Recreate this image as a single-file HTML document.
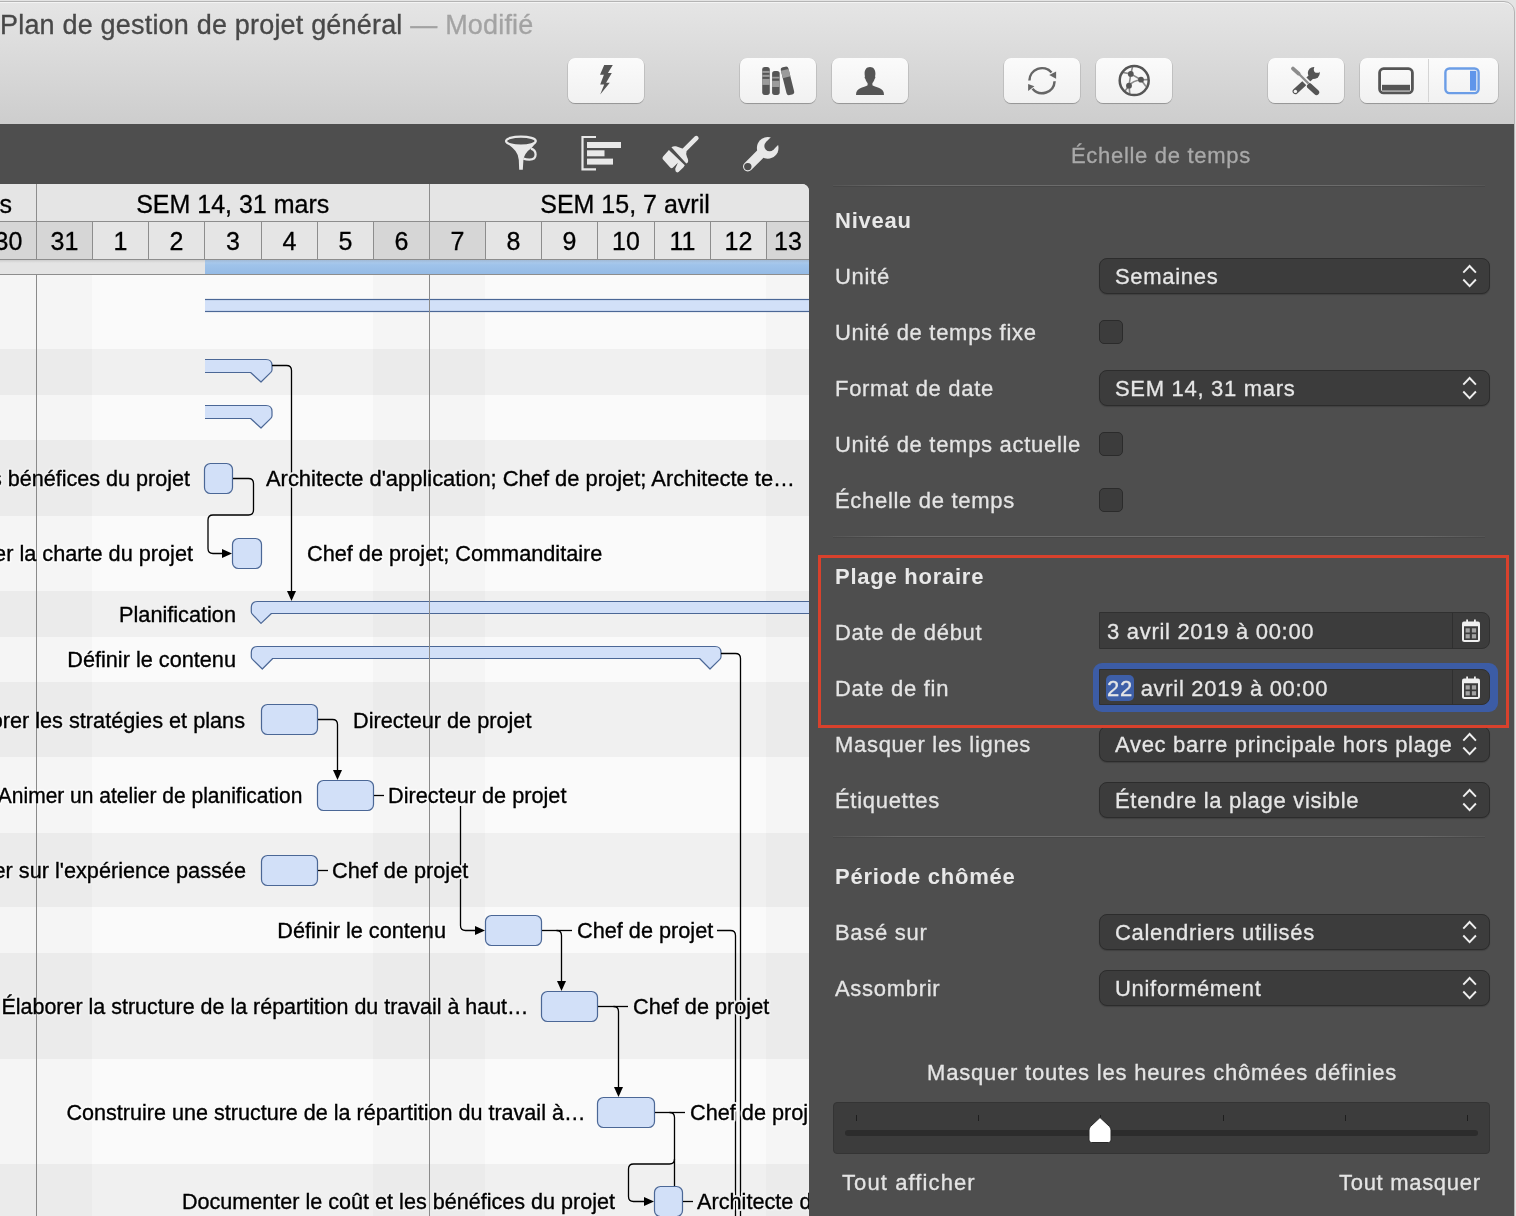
<!DOCTYPE html>
<html><head><meta charset="utf-8">
<style>
*{box-sizing:border-box;margin:0;padding:0}
html,body{width:1516px;height:1216px;overflow:hidden;background:#e4e4e4;font-family:"Liberation Sans",sans-serif}
.abs{position:absolute}
#win{position:absolute;left:0;top:0;width:1516px;height:1216px;overflow:hidden;will-change:transform}
#frame{position:absolute;left:-20px;top:1px;width:1535px;height:1300px;border:1px solid #b4b4b4;border-top-right-radius:11px;pointer-events:none}
#titlebar{position:absolute;left:0;top:2px;width:1514px;height:122px;background:linear-gradient(#e5e5e5,#cdcdcd);border-top:1px solid #f4f4f4;border-top-right-radius:10px}
#title{position:absolute;left:0px;top:10px;font-size:27px;color:#484848;white-space:nowrap;letter-spacing:0.19px;-webkit-text-stroke:0.3px currentColor}
#title span{color:#a3a3a3}
.tb{position:absolute;top:57px;height:45px;width:76px;border-radius:7px;background:linear-gradient(#fbfbfb,#f1f1f1);box-shadow:0 0.5px 0 0.5px rgba(0,0,0,0.18),0 1px 1px rgba(0,0,0,0.12)}
#gantt{position:absolute;left:0;top:184px;width:809px;height:1032px;background:#fafafa;border-top-right-radius:7px;overflow:hidden}
#dark{position:absolute;left:0;top:124px;width:1514px;height:1092px;background:#4e4e4e}
#insp{position:absolute;left:0;top:0;width:1516px;height:1216px;color:#e6e6e6}
.lbl{position:absolute;left:26px;font-size:22px;letter-spacing:0.7px;white-space:nowrap;color:#e4e4e4;-webkit-text-stroke:0.3px currentColor}
.hdr{position:absolute;left:26px;font-size:22px;font-weight:bold;letter-spacing:0.75px;white-space:nowrap;color:#e8e8e8}
.sep{position:absolute;left:24px;width:652px;height:1px;background:linear-gradient(90deg,rgba(110,110,110,0.2),#6c6c6c 10%,#6c6c6c 90%,rgba(110,110,110,0.2));box-shadow:0 1px 0 rgba(0,0,0,0.08)}
.pop{position:absolute;left:290px;width:391px;height:36px;border-radius:8px;background:#3c3c3c;border:1px solid #2c2c2c;box-shadow:0 1px 1px rgba(0,0,0,0.18)}
.pop .t{position:absolute;left:15px;top:4px;font-size:22px;letter-spacing:0.7px;white-space:nowrap;color:#e6e6e6;-webkit-text-stroke:0.3px currentColor}

.cb{position:absolute;left:290px;width:24px;height:24px;border-radius:5px;background:#3c3c3c;border:1px solid #2b2b2b}
</style></head><body>
<div id="win">
<div id="dark"></div>
<div id="titlebar"></div>
<div id="title">Plan de gestion de projet général <span>— Modifié</span></div>
<div class="tb" style="left:568px;top:58px;width:76px;height:45px;"></div>
<div class="tb" style="left:740px;top:58px;width:76px;height:45px;"></div>
<div class="tb" style="left:832px;top:58px;width:76px;height:45px;"></div>
<div class="tb" style="left:1004px;top:58px;width:76px;height:45px;"></div>
<div class="tb" style="left:1096px;top:58px;width:76px;height:45px;"></div>
<div class="tb" style="left:1268px;top:58px;width:76px;height:45px;"></div>
<div class="tb" style="left:1360px;top:58px;width:138px;height:45px;"></div>
<div style="position:absolute;left:1428px;top:59px;width:1px;height:43px;background:#d4d4d4"></div>
<svg style="position:absolute;left:0;top:0" width="1516" height="124" viewBox="0 0 1516 124"><path d="M604.2,65 L612.8,65 L607.9,73 L611.8,73 L606.1,82.8 L609.8,82.8 L600.2,94.6 L604.2,84.6 L600.2,84.6 L603.9,74.8 L600,74.8 Z" fill="#555555"/><rect x="762.2" y="66.9" width="7.6" height="28" rx="2.6" fill="#555555"/><rect x="762.2" y="70.9" width="7.6" height="2.0" fill="#9b9b9b"/><rect x="762.2" y="74.8" width="7.6" height="2.1000000000000085" fill="#9b9b9b"/><rect x="762.2" y="78.9" width="7.6" height="6.0" fill="#9b9b9b"/><rect x="772.1" y="71.1" width="7.6" height="23.8" rx="2.6" fill="#555555"/><rect x="772.1" y="76.8" width="7.6" height="1.7000000000000028" fill="#9b9b9b"/><rect x="772.1" y="80.8" width="7.6" height="6.200000000000003" fill="#9b9b9b"/><g transform="rotate(-14 787.4 80.9)"><rect x="783.6" y="66.6" width="7.8" height="28.6" rx="2.6" fill="#555555"/><rect x="783.6" y="69.6" width="7.8" height="7.6" fill="#9b9b9b"/></g><path d="M870,66.9 C866.3,66.9 864.6,69.8 864.6,73.5 C864.6,74.6 864.7,75.6 865,76.6 C864.4,76.8 864.5,78.3 865.4,78.9 C866,80.9 866.9,82.4 867.6,83.1 L867.6,85.3 C866.4,86.2 862.6,87.2 859.8,88.6 C857.6,89.7 856,91.4 856,94.9 L884,94.9 C884,91.4 882.4,89.7 880.2,88.6 C877.4,87.2 873.6,86.2 872.4,85.3 L872.4,83.1 C873.1,82.4 874,80.9 874.6,78.9 C875.5,78.3 875.6,76.8 875,76.6 C875.3,75.6 875.4,74.6 875.4,73.5 C875.4,69.8 873.7,66.9 870,66.9 Z" fill="#555555"/><path d="M1029.4,80.6 A12.6,12.6 0 0 1 1051.5,72.5" fill="none" stroke="#666666" stroke-width="2.5"/><path d="M1049.2,75.1 L1056.1,71.4 L1056.1,78.8 Z" fill="#666666"/><path d="M1054.6,81.2 A12.6,12.6 0 0 1 1032.5,88.8" fill="none" stroke="#666666" stroke-width="2.5"/><path d="M1028.1,83.9 L1028.1,91 L1034.4,86.3 Z" fill="#666666"/><g stroke="#8a8a8a" stroke-width="1.6" fill="none"><path d="M1130.8,73.9 L1141,79.7 M1130.8,73.9 L1129,85.7 M1129,85.7 Q1133,80.5 1141,79.7 M1130.8,73.9 L1132.5,67 M1130.8,73.9 L1123,72.5 M1141,79.7 L1148.5,79.6 M1141,79.7 L1146,86.5 M1129,85.7 L1129.8,93.5 M1129,85.7 L1124.8,91.2"/></g><circle cx="1134.2" cy="80.6" r="14.5" fill="none" stroke="#555555" stroke-width="2.5"/><circle cx="1130.8" cy="73.9" r="2.9" fill="#555555"/><circle cx="1141" cy="79.7" r="2.9" fill="#555555"/><circle cx="1129" cy="85.7" r="2.9" fill="#555555"/><defs><mask id="wm" maskUnits="userSpaceOnUse" x="1270" y="55" width="70" height="50"><rect x="1280" y="60" width="50" height="40" fill="#fff"/><circle cx="1317.2" cy="69.4" r="3.4" fill="#000"/><path d="M1317.2,69.4 L1321.5,63.5 L1325,68 Z" fill="#000"/><circle cx="1295.4" cy="91.4" r="1.7" fill="#000"/></mask></defs><g mask="url(#wm)" fill="#555555"><path d="M1311,77 L1295.4,91.4" stroke="#555555" stroke-width="5.6" stroke-linecap="round"/><circle cx="1313.8" cy="73" r="6"/></g><path d="M1296,71 L1316,91" stroke="#f5f5f5" stroke-width="5.5"/><path d="M1293,68.6 L1298.6,73.6" stroke="#8c8c8c" stroke-width="3.8" stroke-linecap="round"/><path d="M1298,73 L1308.5,83.5" stroke="#8c8c8c" stroke-width="2.3"/><path d="M1309.8,86.3 L1316.4,92.3" stroke="#555555" stroke-width="5.6" stroke-linecap="round"/><path d="M1306.8,86 L1309.8,83 L1312,85.2 L1309,88.2 Z" fill="#555555"/><rect x="1379.6" y="68.7" width="32.8" height="24.2" rx="4" fill="none" stroke="#555555" stroke-width="2.8"/><rect x="1382" y="84.8" width="28" height="5.8" fill="#555555"/><rect x="1445.4" y="68.5" width="33.2" height="24.6" rx="4" fill="none" stroke="#6b9de6" stroke-width="2.4"/><rect x="1470" y="70.8" width="6.3" height="19.8" fill="#5f95ea"/></svg>
<svg style="position:absolute;left:0;top:0" width="1516" height="190" viewBox="0 0 1516 190"><ellipse cx="520.9" cy="141.1" rx="14.9" ry="4.5" fill="none" stroke="#e8e8e8" stroke-width="2.2"/><path d="M506,142.5 Q512,147 515.5,151 Q518.3,154.5 518.8,160 L519.2,169.8 L522.8,169.8 L523.4,160 Q524.3,153 531.5,148 L536.2,142.5 Q529,145.2 521,145.2 Q512,145.2 506,142.5 Z" fill="#e8e8e8"/><path d="M531,148.6 Q535.6,150 535.6,154.5 Q535.6,159.6 529.5,159.6 Q526,159.6 523.4,158.6" fill="none" stroke="#e8e8e8" stroke-width="2.2"/><path d="M596,137 L582.5,137 L582.5,169.3 L596,169.3" fill="none" stroke="#e8e8e8" stroke-width="2.2"/><rect x="587" y="142" width="34" height="6" fill="#e8e8e8"/><rect x="587" y="150.3" width="17.5" height="6" fill="#e8e8e8"/><rect x="587" y="158.6" width="26" height="6" fill="#e8e8e8"/><path d="M696.3,138.2 L684.3,150.2" stroke="#e8e8e8" stroke-width="4.7" stroke-linecap="round"/><path d="M671.4,147.3 Q673.5,145.8 676,146.3 L683,148.7 L686.6,151.5 Q685.5,154 687,157 Q689,160.5 687.6,162.8 L686.3,163.6 Z" fill="#e8e8e8"/><path d="M668.9,150.1 L684.8,165.3 L683.3,167.5 L678.5,172 Q676.8,173.2 675.6,171.3 L675.2,168.8 L677.9,162.8 L672.8,167.8 Q671.5,168.6 670.2,167.6 L662.8,159.3 Q661.9,157.9 663.1,156.4 Z" fill="#e8e8e8"/><defs><mask id="wrm" maskUnits="userSpaceOnUse" x="720" y="120" width="80" height="70"><rect x="730" y="125" width="60" height="60" fill="#fff"/><circle cx="769.6" cy="146" r="5.3" fill="#000"/><path d="M769.6,146 L781,134.6" stroke="#000" stroke-width="10.6"/><circle cx="747.8" cy="166.6" r="3.7" fill="#000"/></mask></defs><g mask="url(#wrm)"><circle cx="767.7" cy="147.9" r="10.8" fill="#e8e8e8"/><path d="M747.8,166.6 L762,152.4" stroke="#e8e8e8" stroke-width="9.6" stroke-linecap="round"/></g></svg>
<div id="insp">
<div class="lbl" style="left:1071px;top:143px;line-height:25px;color:#a9a9a9">Échelle de temps</div>
<div class="sep" style="left:833px;top:185px"></div>
<div class="hdr" style="left:835px;top:208px;line-height:25px">Niveau</div>
<div class="lbl" style="left:835px;top:264px;line-height:25px">Unité</div>
<div class="pop" style="left:1099px;top:258px"><div class="t" style="top:5px;left:15px;line-height:25px">Semaines</div><svg width="391" height="36" viewBox="0 0 391 36" style="position:absolute;left:-1px;top:-1px"><path d="M364.3,14.6 L370.6,8 L376.9,14.6 M364.3,21.5 L370.6,28.1 L376.9,21.5" fill="none" stroke="#efefef" stroke-width="1.9" stroke-linecap="butt" stroke-linejoin="miter"/></svg></div>
<div class="lbl" style="left:835px;top:320px;line-height:25px">Unité de temps fixe</div>
<div class="cb" style="left:1099px;top:320px"></div>
<div class="lbl" style="left:835px;top:376px;line-height:25px">Format de date</div>
<div class="pop" style="left:1099px;top:370px"><div class="t" style="top:5px;left:15px;line-height:25px">SEM 14, 31 mars</div><svg width="391" height="36" viewBox="0 0 391 36" style="position:absolute;left:-1px;top:-1px"><path d="M364.3,14.6 L370.6,8 L376.9,14.6 M364.3,21.5 L370.6,28.1 L376.9,21.5" fill="none" stroke="#efefef" stroke-width="1.9" stroke-linecap="butt" stroke-linejoin="miter"/></svg></div>
<div class="lbl" style="left:835px;top:432px;line-height:25px">Unité de temps actuelle</div>
<div class="cb" style="left:1099px;top:432px"></div>
<div class="lbl" style="left:835px;top:488px;line-height:25px">Échelle de temps</div>
<div class="cb" style="left:1099px;top:488px"></div>
<div class="sep" style="left:833px;top:536px"></div>
<div class="hdr" style="left:835px;top:564px;line-height:25px">Plage horaire</div>
<div class="lbl" style="left:835px;top:620px;line-height:25px">Date de début</div>
<div class="lbl" style="left:835px;top:676px;line-height:25px">Date de fin</div>
<div class="lbl" style="left:835px;top:732px;line-height:25px">Masquer les lignes</div>
<div class="pop" style="left:1099px;top:726px"><div class="t" style="top:5px;left:15px;line-height:25px">Avec barre principale hors plage</div><svg width="391" height="36" viewBox="0 0 391 36" style="position:absolute;left:-1px;top:-1px"><path d="M364.3,14.6 L370.6,8 L376.9,14.6 M364.3,21.5 L370.6,28.1 L376.9,21.5" fill="none" stroke="#efefef" stroke-width="1.9" stroke-linecap="butt" stroke-linejoin="miter"/></svg></div>
<div class="lbl" style="left:835px;top:788px;line-height:25px">Étiquettes</div>
<div class="pop" style="left:1099px;top:782px"><div class="t" style="top:5px;left:15px;line-height:25px">Étendre la plage visible</div><svg width="391" height="36" viewBox="0 0 391 36" style="position:absolute;left:-1px;top:-1px"><path d="M364.3,14.6 L370.6,8 L376.9,14.6 M364.3,21.5 L370.6,28.1 L376.9,21.5" fill="none" stroke="#efefef" stroke-width="1.9" stroke-linecap="butt" stroke-linejoin="miter"/></svg></div>
<div class="sep" style="left:833px;top:836px"></div>
<div class="hdr" style="left:835px;top:864px;line-height:25px">Période chômée</div>
<div class="lbl" style="left:835px;top:920px;line-height:25px">Basé sur</div>
<div class="pop" style="left:1099px;top:914px"><div class="t" style="top:5px;left:15px;line-height:25px">Calendriers utilisés</div><svg width="391" height="36" viewBox="0 0 391 36" style="position:absolute;left:-1px;top:-1px"><path d="M364.3,14.6 L370.6,8 L376.9,14.6 M364.3,21.5 L370.6,28.1 L376.9,21.5" fill="none" stroke="#efefef" stroke-width="1.9" stroke-linecap="butt" stroke-linejoin="miter"/></svg></div>
<div class="lbl" style="left:835px;top:976px;line-height:25px">Assombrir</div>
<div class="pop" style="left:1099px;top:970px"><div class="t" style="top:5px;left:15px;line-height:25px">Uniformément</div><svg width="391" height="36" viewBox="0 0 391 36" style="position:absolute;left:-1px;top:-1px"><path d="M364.3,14.6 L370.6,8 L376.9,14.6 M364.3,21.5 L370.6,28.1 L376.9,21.5" fill="none" stroke="#efefef" stroke-width="1.9" stroke-linecap="butt" stroke-linejoin="miter"/></svg></div>
<div class="lbl" style="left:927px;top:1060px;line-height:25px;letter-spacing:0.8px">Masquer toutes les heures chômées définies</div>
<div style="position:absolute;left:833px;top:1102px;width:657px;height:52px;background:#3c3c3c;border-radius:4px;border:1px solid #343434"></div>
<div style="position:absolute;left:845px;top:1130px;width:633px;height:6px;background:#2c2c2c;border-radius:3px"></div>
<div style="position:absolute;left:855.5px;top:1115px;width:1.5px;height:6px;background:#1e1e1e"></div>
<div style="position:absolute;left:977.5px;top:1115px;width:1.5px;height:6px;background:#1e1e1e"></div>
<div style="position:absolute;left:1099.5px;top:1115px;width:1.5px;height:6px;background:#1e1e1e"></div>
<div style="position:absolute;left:1222.5px;top:1115px;width:1.5px;height:6px;background:#1e1e1e"></div>
<div style="position:absolute;left:1344.5px;top:1115px;width:1.5px;height:6px;background:#1e1e1e"></div>
<div style="position:absolute;left:1466.5px;top:1115px;width:1.5px;height:6px;background:#1e1e1e"></div>
<svg style="position:absolute;left:1087px;top:1116px" width="26" height="28" viewBox="0 0 26 28"><path d="M13,1.5 L22.5,10.5 Q24,12 24,14 L24,24 Q24,26.5 21.5,26.5 L4.5,26.5 Q2,26.5 2,24 L2,14 Q2,12 3.5,10.5 Z" fill="#ffffff" stroke="#2a2a2a" stroke-width="1"/></svg>
<div class="lbl" style="left:842px;top:1170px;line-height:25px;letter-spacing:1.1px">Tout afficher</div>
<div class="lbl" style="left:1339px;top:1170px;line-height:25px">Tout masquer</div>
<div style="position:absolute;left:1099px;top:612px;width:391px;height:37px;background:#3c3c3c;border-radius:0 8px 8px 0;border:1px solid #303030"></div>
<div style="position:absolute;left:1452px;top:612px;width:1px;height:37px;background:#2f2f2f"></div>
<div style="position:absolute;left:1461px;top:619px;width:20px;height:24px"><svg width="20" height="24" viewBox="0 0 20 24"><path d="M2,6 L18,6 L18,20.5 Q18,22 16.5,22 L3.5,22 Q2,22 2,20.5 Z" fill="none" stroke="#f0f0f0" stroke-width="2"/><path d="M1,7.2 L1,4.5 Q1,2.5 3,2.5 L17,2.5 Q19,2.5 19,4.5 L19,7.2 Z" fill="#f0f0f0"/><rect x="5.2" y="0.5" width="1.8" height="3" fill="#f0f0f0"/><rect x="13" y="0.5" width="1.8" height="3" fill="#f0f0f0"/><rect x="4.6" y="9.3" width="4.2" height="4.2" fill="#a3a3a3"/><rect x="10.9" y="9.3" width="4.2" height="4.2" fill="#a3a3a3"/><rect x="4.6" y="15.2" width="4.2" height="4.2" fill="#a3a3a3"/><rect x="10.9" y="15.2" width="4.2" height="4.2" fill="#a3a3a3"/></svg></div>
<div class="lbl" style="left:1107px;top:619px;line-height:25px;color:#e6e6e6">3 avril 2019 à 00:00</div>
<div style="position:absolute;left:1093px;top:663px;width:405px;height:49px;border-radius:9px;background:#3c5ca5"></div>
<div style="position:absolute;left:1099px;top:669px;width:391px;height:36px;background:#3c3c3c;border-radius:0 8px 8px 0;border:1px solid #303030"></div>
<div style="position:absolute;left:1452px;top:669px;width:1px;height:36px;background:#2f2f2f"></div>
<div style="position:absolute;left:1461px;top:676px;width:20px;height:24px"><svg width="20" height="24" viewBox="0 0 20 24"><path d="M2,6 L18,6 L18,20.5 Q18,22 16.5,22 L3.5,22 Q2,22 2,20.5 Z" fill="none" stroke="#f0f0f0" stroke-width="2"/><path d="M1,7.2 L1,4.5 Q1,2.5 3,2.5 L17,2.5 Q19,2.5 19,4.5 L19,7.2 Z" fill="#f0f0f0"/><rect x="5.2" y="0.5" width="1.8" height="3" fill="#f0f0f0"/><rect x="13" y="0.5" width="1.8" height="3" fill="#f0f0f0"/><rect x="4.6" y="9.3" width="4.2" height="4.2" fill="#a3a3a3"/><rect x="10.9" y="9.3" width="4.2" height="4.2" fill="#a3a3a3"/><rect x="4.6" y="15.2" width="4.2" height="4.2" fill="#a3a3a3"/><rect x="10.9" y="15.2" width="4.2" height="4.2" fill="#a3a3a3"/></svg></div>
<div class="lbl" style="left:1107px;top:676px;line-height:25px;color:#e6e6e6"><span style="background:#3e5fa8;border-radius:5px;padding:1px 1px 0px 1px;margin-left:-1px">22</span> avril 2019 à 00:00</div>
<div style="position:absolute;left:818px;top:555px;width:691px;height:173px;border:3px solid #d8412c"></div>
</div>
<div id="gantt"><svg width="809" height="1032" viewBox="0 184 809 1032" style="position:absolute;left:0;top:0;font-family:'Liberation Sans',sans-serif">
<rect x="0" y="183" width="809" height="92" fill="#e5e5e5"/>
<rect x="-20" y="222" width="56" height="37" fill="#d6d6d6"/>
<rect x="36" y="222" width="56" height="37" fill="#d6d6d6"/>
<rect x="373" y="222" width="56" height="37" fill="#d6d6d6"/>
<rect x="429" y="222" width="56" height="37" fill="#d6d6d6"/>
<rect x="766" y="222" width="56" height="37" fill="#d6d6d6"/>
<rect x="0" y="260" width="809" height="14" fill="#e4e4e4"/>
<defs><linearGradient id="pg" x1="0" y1="0" x2="0" y2="1"><stop offset="0" stop-color="#b3cfee"/><stop offset="0.35" stop-color="#9fc3ea"/><stop offset="1" stop-color="#95bbe6"/></linearGradient><linearGradient id="sh" x1="0" y1="0" x2="0" y2="1"><stop offset="0" stop-color="#000" stop-opacity="0.10"/><stop offset="1" stop-color="#000" stop-opacity="0"/></linearGradient></defs>
<rect x="205" y="260" width="604" height="14" fill="url(#pg)"/>
<rect x="0" y="260" width="809" height="3" fill="url(#sh)"/>
<rect x="0" y="221" width="809" height="1" fill="#8d8d8d"/>
<rect x="0" y="259" width="809" height="1" fill="#8d8d8d"/>
<rect x="0" y="274" width="809" height="1" fill="#8d8d8d"/>
<rect x="36" y="222" width="1" height="37" fill="#8d8d8d"/>
<rect x="92" y="222" width="1" height="37" fill="#8d8d8d"/>
<rect x="148" y="222" width="1" height="37" fill="#8d8d8d"/>
<rect x="204" y="222" width="1" height="37" fill="#8d8d8d"/>
<rect x="261" y="222" width="1" height="37" fill="#8d8d8d"/>
<rect x="317" y="222" width="1" height="37" fill="#8d8d8d"/>
<rect x="373" y="222" width="1" height="37" fill="#8d8d8d"/>
<rect x="429" y="222" width="1" height="37" fill="#8d8d8d"/>
<rect x="485" y="222" width="1" height="37" fill="#8d8d8d"/>
<rect x="541" y="222" width="1" height="37" fill="#8d8d8d"/>
<rect x="597" y="222" width="1" height="37" fill="#8d8d8d"/>
<rect x="654" y="222" width="1" height="37" fill="#8d8d8d"/>
<rect x="710" y="222" width="1" height="37" fill="#8d8d8d"/>
<rect x="766" y="222" width="1" height="37" fill="#8d8d8d"/>
<rect x="822" y="222" width="1" height="37" fill="#8d8d8d"/>
<rect x="36" y="184" width="1" height="38" fill="#8d8d8d"/>
<rect x="429" y="184" width="1" height="38" fill="#8d8d8d"/>
<text x="232.7" y="213" text-anchor="middle" font-size="25" fill="#000" stroke="#000" stroke-width="0.3">SEM 14, 31 mars</text>
<text x="625" y="213" text-anchor="middle" font-size="25" fill="#000" stroke="#000" stroke-width="0.3">SEM 15, 7 avril</text>
<text x="12" y="213" text-anchor="end" font-size="25" fill="#000" stroke="#000" stroke-width="0.3">s</text>
<text x="8.5" y="250" text-anchor="middle" font-size="25" fill="#000" stroke="#000" stroke-width="0.3">30</text>
<text x="64.5" y="250" text-anchor="middle" font-size="25" fill="#000" stroke="#000" stroke-width="0.3">31</text>
<text x="120.5" y="250" text-anchor="middle" font-size="25" fill="#000" stroke="#000" stroke-width="0.3">1</text>
<text x="176.5" y="250" text-anchor="middle" font-size="25" fill="#000" stroke="#000" stroke-width="0.3">2</text>
<text x="233.0" y="250" text-anchor="middle" font-size="25" fill="#000" stroke="#000" stroke-width="0.3">3</text>
<text x="289.5" y="250" text-anchor="middle" font-size="25" fill="#000" stroke="#000" stroke-width="0.3">4</text>
<text x="345.5" y="250" text-anchor="middle" font-size="25" fill="#000" stroke="#000" stroke-width="0.3">5</text>
<text x="401.5" y="250" text-anchor="middle" font-size="25" fill="#000" stroke="#000" stroke-width="0.3">6</text>
<text x="457.5" y="250" text-anchor="middle" font-size="25" fill="#000" stroke="#000" stroke-width="0.3">7</text>
<text x="513.5" y="250" text-anchor="middle" font-size="25" fill="#000" stroke="#000" stroke-width="0.3">8</text>
<text x="569.5" y="250" text-anchor="middle" font-size="25" fill="#000" stroke="#000" stroke-width="0.3">9</text>
<text x="626.0" y="250" text-anchor="middle" font-size="25" fill="#000" stroke="#000" stroke-width="0.3">10</text>
<text x="682.5" y="250" text-anchor="middle" font-size="25" fill="#000" stroke="#000" stroke-width="0.3">11</text>
<text x="738.5" y="250" text-anchor="middle" font-size="25" fill="#000" stroke="#000" stroke-width="0.3">12</text>
<text x="788.0" y="250" text-anchor="middle" font-size="25" fill="#000" stroke="#000" stroke-width="0.3">13</text>
<rect x="0" y="275" width="809" height="74" fill="#fafafa"/>
<rect x="0" y="349" width="809" height="46" fill="#f0f0f0"/>
<rect x="0" y="395" width="809" height="45" fill="#fafafa"/>
<rect x="0" y="440" width="809" height="76" fill="#f0f0f0"/>
<rect x="0" y="516" width="809" height="75" fill="#fafafa"/>
<rect x="0" y="591" width="809" height="46" fill="#f0f0f0"/>
<rect x="0" y="637" width="809" height="45" fill="#fafafa"/>
<rect x="0" y="682" width="809" height="75" fill="#f0f0f0"/>
<rect x="0" y="757" width="809" height="76" fill="#fafafa"/>
<rect x="0" y="833" width="809" height="74" fill="#f0f0f0"/>
<rect x="0" y="907" width="809" height="46" fill="#fafafa"/>
<rect x="0" y="953" width="809" height="106" fill="#f0f0f0"/>
<rect x="0" y="1059" width="809" height="105" fill="#fafafa"/>
<rect x="0" y="1164" width="809" height="52" fill="#f0f0f0"/>
<rect x="-20" y="275" width="112" height="941" fill="#000" fill-opacity="0.02"/>
<rect x="373" y="275" width="112" height="941" fill="#000" fill-opacity="0.02"/>
<rect x="766" y="275" width="56" height="941" fill="#000" fill-opacity="0.02"/>
<clipPath id="cl205"><rect x="205" y="184" width="700" height="1100"/></clipPath><g clip-path="url(#cl205)">
<rect x="200" y="299.5" width="620" height="12" fill="#d2e0f8" stroke="#4b6796" stroke-width="1.2"/>
<path d="M200,359.5 L266,359.5 Q272,359.5 272,365.5 L272,369.7 Q272,371.1 270.8,372.4 L261,382 L250.6,372.5 L200,372.5" fill="#d2e0f8" stroke="#4b6796" stroke-width="1.2" stroke-linejoin="round"/>
<path d="M200,405.5 L266,405.5 Q272,405.5 272,411.5 L272,415.7 Q272,417.1 270.8,418.4 L261,428 L250.6,418.5 L200,418.5" fill="#d2e0f8" stroke="#4b6796" stroke-width="1.2" stroke-linejoin="round"/>
</g>
<rect x="204.5" y="463.5" width="28" height="30" rx="6" fill="#d2e0f8" stroke="#4b6796" stroke-width="1.2"/>
<rect x="232.5" y="538.5" width="29" height="30" rx="6" fill="#d2e0f8" stroke="#4b6796" stroke-width="1.2"/>
<path d="M830,601.5 L257.3,601.5 Q251.3,601.5 251.3,607.5 L251.3,611.7 Q251.3,613.1 252.5,614.4 L261,623.4 L271.4,613.5 L830,613.5" fill="#d2e0f8" stroke="#4b6796" stroke-width="1.2" stroke-linejoin="round"/>
<path d="M257.3,646.5 L715,646.5 Q721,646.5 721,652.5 L721,656.7 Q721,658.1 719.8,659.4 L710,669 L699.6,658.5 L272.7,658.5 L262.3,669 L252.5,659.4 Q251.3,658.1 251.3,656.7 L251.3,652.5 Q251.3,646.5 257.3,646.5 Z" fill="#d2e0f8" stroke="#4b6796" stroke-width="1.2" stroke-linejoin="round"/>
<rect x="261.5" y="704.5" width="56" height="30" rx="6" fill="#d2e0f8" stroke="#4b6796" stroke-width="1.2"/>
<rect x="317.5" y="780.5" width="56" height="30" rx="6" fill="#d2e0f8" stroke="#4b6796" stroke-width="1.2"/>
<rect x="261.5" y="855.5" width="56" height="30" rx="6" fill="#d2e0f8" stroke="#4b6796" stroke-width="1.2"/>
<rect x="485.5" y="915.5" width="56" height="30" rx="6" fill="#d2e0f8" stroke="#4b6796" stroke-width="1.2"/>
<rect x="541.5" y="991.5" width="56" height="30" rx="6" fill="#d2e0f8" stroke="#4b6796" stroke-width="1.2"/>
<rect x="597.5" y="1097.5" width="57" height="30" rx="6" fill="#d2e0f8" stroke="#4b6796" stroke-width="1.2"/>
<rect x="654.5" y="1186.5" width="28" height="30" rx="6" fill="#d2e0f8" stroke="#4b6796" stroke-width="1.2"/>
<path d="M272,365.5 L286.5,365.5 Q291.5,365.5 291.5,370.5 L291.5,592" fill="none" stroke="#000" stroke-width="1.3" stroke-linejoin="round"/>
<path d="M287.0,591 L296.0,591 L291.5,601 Z" fill="#000"/>
<path d="M233,478.5 L248.5,478.5 Q253.5,478.5 253.5,483.5 L253.5,510 Q253.5,515 248.5,515 L213,515 Q208,515 208,520 L208,548.5 Q208,553.5 213,553.5 L223,553.5" fill="none" stroke="#000" stroke-width="1.3" stroke-linejoin="round"/>
<path d="M222,549.0 L222,558.0 L232,553.5 Z" fill="#000"/>
<path d="M318,719.5 L332.5,719.5 Q337.5,719.5 337.5,724.5 L337.5,771" fill="none" stroke="#000" stroke-width="1.3" stroke-linejoin="round"/>
<path d="M333.0,770 L342.0,770 L337.5,780 Z" fill="#000"/>
<path d="M374,795.5 L384,795.5" fill="none" stroke="#000" stroke-width="1.3" stroke-linejoin="round"/>
<path d="M318,870.5 L328,870.5" fill="none" stroke="#000" stroke-width="1.3" stroke-linejoin="round"/>
<path d="M460.5,806 L460.5,925.5 Q460.5,930.5 465.5,930.5 L476,930.5" fill="none" stroke="#000" stroke-width="1.3" stroke-linejoin="round"/>
<path d="M475,926.0 L475,935.0 L485,930.5 Z" fill="#000"/>
<path d="M542,930.5 L572,930.5" fill="none" stroke="#000" stroke-width="1.3" stroke-linejoin="round"/>
<path d="M556.5,930.5 Q561.5,930.5 561.5,935.5 L561.5,982" fill="none" stroke="#000" stroke-width="1.3" stroke-linejoin="round"/>
<path d="M557.0,981 L566.0,981 L561.5,991 Z" fill="#000"/>
<path d="M598,1006.5 L628,1006.5" fill="none" stroke="#000" stroke-width="1.3" stroke-linejoin="round"/>
<path d="M613.5,1006.5 Q618.5,1006.5 618.5,1011.5 L618.5,1088" fill="none" stroke="#000" stroke-width="1.3" stroke-linejoin="round"/>
<path d="M614.0,1087 L623.0,1087 L618.5,1097 Z" fill="#000"/>
<path d="M655,1112.5 L685,1112.5" fill="none" stroke="#000" stroke-width="1.3" stroke-linejoin="round"/>
<path d="M669.5,1112.5 Q674.5,1112.5 674.5,1117.5 L674.5,1186" fill="none" stroke="#000" stroke-width="1.3" stroke-linejoin="round"/>
<path d="M674.5,1159 Q674.5,1164 669.5,1164 L633.5,1164 Q628.5,1164 628.5,1169 L628.5,1196.5 Q628.5,1201.5 633.5,1201.5 L645,1201.5" fill="none" stroke="#000" stroke-width="1.3" stroke-linejoin="round"/>
<path d="M644,1197.0 L644,1206.0 L654,1201.5 Z" fill="#000"/>
<path d="M683,1201.5 L693,1201.5" fill="none" stroke="#000" stroke-width="1.3" stroke-linejoin="round"/>
<path d="M721,653.5 L735.5,653.5 Q740.5,653.5 740.5,658.5 L740.5,1216" fill="none" stroke="#000" stroke-width="1.3" stroke-linejoin="round"/>
<path d="M717,930.5 L730.5,930.5 Q735.5,930.5 735.5,935.5 L735.5,1216" fill="none" stroke="#000" stroke-width="1.3" stroke-linejoin="round"/>
<text x="190" y="486" text-anchor="end" font-size="21.7" fill="none" stroke="#f0f0f0" stroke-width="4" stroke-linejoin="round" textLength="433" lengthAdjust="spacingAndGlyphs">Documenter le coût et les bénéfices du projet</text>
<text x="266" y="486" text-anchor="start" font-size="21.7" fill="none" stroke="#f0f0f0" stroke-width="4" stroke-linejoin="round" textLength="529" lengthAdjust="spacingAndGlyphs">Architecte d'application; Chef de projet; Architecte te…</text>
<text x="193" y="561" text-anchor="end" font-size="21.7" fill="none" stroke="#fafafa" stroke-width="4" stroke-linejoin="round">Approuver la charte du projet</text>
<text x="307" y="561" text-anchor="start" font-size="21.7" fill="none" stroke="#fafafa" stroke-width="4" stroke-linejoin="round">Chef de projet; Commanditaire</text>
<text x="236" y="622" text-anchor="end" font-size="21.7" fill="none" stroke="#f0f0f0" stroke-width="4" stroke-linejoin="round">Planification</text>
<text x="236" y="667" text-anchor="end" font-size="21.7" fill="none" stroke="#fafafa" stroke-width="4" stroke-linejoin="round">Définir le contenu</text>
<text x="245" y="728" text-anchor="end" font-size="21.7" fill="none" stroke="#f0f0f0" stroke-width="4" stroke-linejoin="round">Élaborer les stratégies et plans</text>
<text x="353" y="728" text-anchor="start" font-size="21.7" fill="none" stroke="#f0f0f0" stroke-width="4" stroke-linejoin="round">Directeur de projet</text>
<text x="302.3" y="803" text-anchor="end" font-size="21.7" fill="none" stroke="#fafafa" stroke-width="4" stroke-linejoin="round" textLength="304.5" lengthAdjust="spacingAndGlyphs">Animer un atelier de planification</text>
<text x="388" y="803" text-anchor="start" font-size="21.7" fill="none" stroke="#fafafa" stroke-width="4" stroke-linejoin="round">Directeur de projet</text>
<text x="246" y="878" text-anchor="end" font-size="21.7" fill="none" stroke="#f0f0f0" stroke-width="4" stroke-linejoin="round">Capitaliser sur l'expérience passée</text>
<text x="332" y="878" text-anchor="start" font-size="21.7" fill="none" stroke="#f0f0f0" stroke-width="4" stroke-linejoin="round">Chef de projet</text>
<text x="446" y="938" text-anchor="end" font-size="21.7" fill="none" stroke="#fafafa" stroke-width="4" stroke-linejoin="round">Définir le contenu</text>
<text x="577" y="938" text-anchor="start" font-size="21.7" fill="none" stroke="#fafafa" stroke-width="4" stroke-linejoin="round">Chef de projet</text>
<text x="528.5" y="1014" text-anchor="end" font-size="21.7" fill="none" stroke="#f0f0f0" stroke-width="4" stroke-linejoin="round" textLength="527" lengthAdjust="spacingAndGlyphs">Élaborer la structure de la répartition du travail à haut…</text>
<text x="633" y="1014" text-anchor="start" font-size="21.7" fill="none" stroke="#f0f0f0" stroke-width="4" stroke-linejoin="round">Chef de projet</text>
<text x="585.5" y="1120" text-anchor="end" font-size="21.7" fill="none" stroke="#fafafa" stroke-width="4" stroke-linejoin="round" textLength="519" lengthAdjust="spacingAndGlyphs">Construire une structure de la répartition du travail à…</text>
<text x="690" y="1120" text-anchor="start" font-size="21.7" fill="none" stroke="#fafafa" stroke-width="4" stroke-linejoin="round">Chef de projet</text>
<text x="615" y="1209" text-anchor="end" font-size="21.7" fill="none" stroke="#f0f0f0" stroke-width="4" stroke-linejoin="round" textLength="433" lengthAdjust="spacingAndGlyphs">Documenter le coût et les bénéfices du projet</text>
<text x="697" y="1209" text-anchor="start" font-size="21.7" fill="none" stroke="#f0f0f0" stroke-width="4" stroke-linejoin="round">Architecte d'application</text>
<rect x="36" y="275" width="1" height="941" fill="#8a8a8a"/>
<rect x="429" y="275" width="1" height="941" fill="#8a8a8a"/>
<text x="190" y="486" text-anchor="end" font-size="21.7" fill="#000" stroke="#000" stroke-width="0.35" textLength="433" lengthAdjust="spacingAndGlyphs">Documenter le coût et les bénéfices du projet</text>
<text x="266" y="486" text-anchor="start" font-size="21.7" fill="#000" stroke="#000" stroke-width="0.35" textLength="529" lengthAdjust="spacingAndGlyphs">Architecte d'application; Chef de projet; Architecte te…</text>
<text x="193" y="561" text-anchor="end" font-size="21.7" fill="#000" stroke="#000" stroke-width="0.35">Approuver la charte du projet</text>
<text x="307" y="561" text-anchor="start" font-size="21.7" fill="#000" stroke="#000" stroke-width="0.35">Chef de projet; Commanditaire</text>
<text x="236" y="622" text-anchor="end" font-size="21.7" fill="#000" stroke="#000" stroke-width="0.35">Planification</text>
<text x="236" y="667" text-anchor="end" font-size="21.7" fill="#000" stroke="#000" stroke-width="0.35">Définir le contenu</text>
<text x="245" y="728" text-anchor="end" font-size="21.7" fill="#000" stroke="#000" stroke-width="0.35">Élaborer les stratégies et plans</text>
<text x="353" y="728" text-anchor="start" font-size="21.7" fill="#000" stroke="#000" stroke-width="0.35">Directeur de projet</text>
<text x="302.3" y="803" text-anchor="end" font-size="21.7" fill="#000" stroke="#000" stroke-width="0.35" textLength="304.5" lengthAdjust="spacingAndGlyphs">Animer un atelier de planification</text>
<text x="388" y="803" text-anchor="start" font-size="21.7" fill="#000" stroke="#000" stroke-width="0.35">Directeur de projet</text>
<text x="246" y="878" text-anchor="end" font-size="21.7" fill="#000" stroke="#000" stroke-width="0.35">Capitaliser sur l'expérience passée</text>
<text x="332" y="878" text-anchor="start" font-size="21.7" fill="#000" stroke="#000" stroke-width="0.35">Chef de projet</text>
<text x="446" y="938" text-anchor="end" font-size="21.7" fill="#000" stroke="#000" stroke-width="0.35">Définir le contenu</text>
<text x="577" y="938" text-anchor="start" font-size="21.7" fill="#000" stroke="#000" stroke-width="0.35">Chef de projet</text>
<text x="528.5" y="1014" text-anchor="end" font-size="21.7" fill="#000" stroke="#000" stroke-width="0.35" textLength="527" lengthAdjust="spacingAndGlyphs">Élaborer la structure de la répartition du travail à haut…</text>
<text x="633" y="1014" text-anchor="start" font-size="21.7" fill="#000" stroke="#000" stroke-width="0.35">Chef de projet</text>
<text x="585.5" y="1120" text-anchor="end" font-size="21.7" fill="#000" stroke="#000" stroke-width="0.35" textLength="519" lengthAdjust="spacingAndGlyphs">Construire une structure de la répartition du travail à…</text>
<text x="690" y="1120" text-anchor="start" font-size="21.7" fill="#000" stroke="#000" stroke-width="0.35">Chef de projet</text>
<text x="615" y="1209" text-anchor="end" font-size="21.7" fill="#000" stroke="#000" stroke-width="0.35" textLength="433" lengthAdjust="spacingAndGlyphs">Documenter le coût et les bénéfices du projet</text>
<text x="697" y="1209" text-anchor="start" font-size="21.7" fill="#000" stroke="#000" stroke-width="0.35">Architecte d'application</text>
</svg></div>
<div id="frame"></div>
</div>
</body></html>
